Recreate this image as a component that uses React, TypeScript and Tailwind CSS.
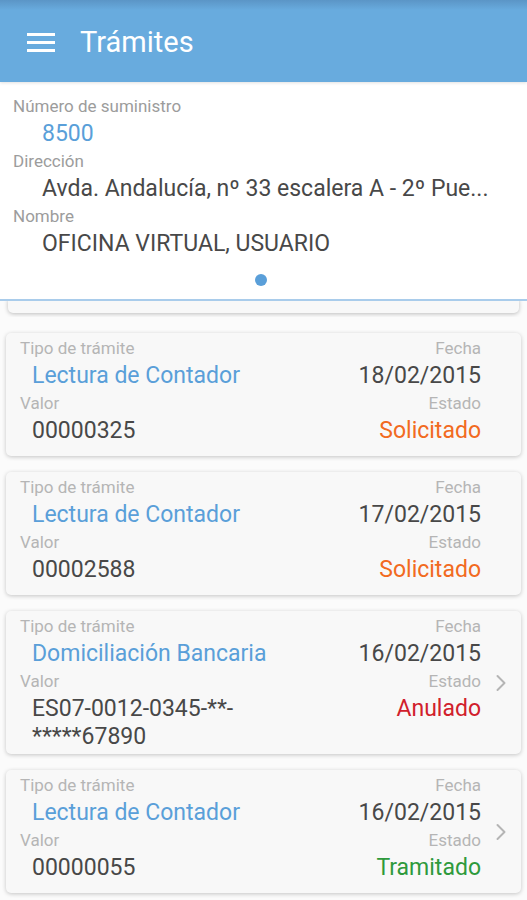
type Tramite = {
  tipo: string;
  fecha: string;
  valor: string[];
  estado: string;
  estadoClass: string;
  chevron?: boolean;
};

const tramites: Tramite[] = [
  { tipo: "Lectura de Contador", fecha: "18/02/2015", valor: ["00000325"], estado: "Solicitado", estadoClass: "text-[#f26a21]" },
  { tipo: "Lectura de Contador", fecha: "17/02/2015", valor: ["00002588"], estado: "Solicitado", estadoClass: "text-[#f26a21]" },
  { tipo: "Domiciliación Bancaria", fecha: "16/02/2015", valor: ["ES07-0012-0345-**-", "*****67890"], estado: "Anulado", estadoClass: "text-[#d1202c]", chevron: true },
  { tipo: "Lectura de Contador", fecha: "16/02/2015", valor: ["00000055"], estado: "Tramitado", estadoClass: "text-[#2e9a3c]", chevron: true },
];

const label = "h-[27px] leading-[27px] text-[17px] text-[#b5b5b5]";
const value = "h-[28px] leading-[28px] text-[23px]";

const Chevron = () => (
  <svg width="12" height="18" viewBox="0 0 12 18" fill="none" className="text-[#b5b5b5]">
    <path d="M2.5 2 L9.5 9 L2.5 16" stroke="currentColor" strokeWidth="2" strokeLinecap="round" strokeLinejoin="round" />
  </svg>
);

const Card = ({ t }: { t: Tramite }) => {
  return (
    <div className={`relative bg-[#f8f8f8] rounded-[5px] shadow-[0_1px_4px_rgba(0,0,0,0.22)] pl-[14px] pr-[40px] pt-[2px] ${t.valor.length > 1 ? "pb-[3px]" : "pb-[11px]"}`}>
      <div className="flex justify-between">
        <div className="flex flex-col">
          <span className={label}>Tipo de trámite</span>
          <span className={`${value} text-[#5a9fd9] pl-[12px]`}>{t.tipo}</span>
          <span className={label}>Valor</span>
          {t.valor.map((v) => (
            <span key={v} className={`${value} text-[#484848] pl-[12px]`}>{v}</span>
          ))}
        </div>
        <div className="flex flex-col items-end">
          <span className={label}>Fecha</span>
          <span className={`${value} text-[#484848]`}>{t.fecha}</span>
          <span className={label}>Estado</span>
          <span className={`${value} ${t.estadoClass}`}>{t.estado}</span>
        </div>
      </div>
      {t.chevron && (
        <div className="absolute right-[14px] top-0 bottom-0 flex items-center">
          <Chevron />
        </div>
      )}
    </div>
  );
};

export default function App() {
  return (
    <div className="w-[527px] h-[900px] overflow-hidden bg-[#fbfbfb] font-['Roboto',sans-serif]">
      <header className="h-[82px] bg-[linear-gradient(to_bottom,#5b95c6_0px,#68abde_10px,#68abde_100%)] flex items-center pl-[27px] pt-[3px] shadow-[0_1px_3px_rgba(0,0,0,0.12)] relative z-10">
        <div className="flex flex-col gap-[5px] w-[28px]">
          <span className="block h-[3px] bg-white" />
          <span className="block h-[3px] bg-white" />
          <span className="block h-[3px] bg-white" />
        </div>
        <h1 className="ml-[25px] text-white text-[29px] leading-none">Trámites</h1>
      </header>

      <section className="bg-white pt-[11px] px-[13px] flex flex-col border-b-2 border-[#a9cceb]">
        <span className="h-[27px] leading-[27px] text-[17px] text-[#9c9c9c]">Número de suministro</span>
        <span className={`${value} text-[#5a9fd9] pl-[29px]`}>8500</span>
        <span className="h-[27px] leading-[27px] text-[17px] text-[#9c9c9c]">Dirección</span>
        <span className={`${value} text-[#484848] pl-[29px] whitespace-nowrap`}>Avda. Andalucía, nº 33 escalera A - 2º Pue...</span>
        <span className="h-[27px] leading-[27px] text-[17px] text-[#9c9c9c]">Nombre</span>
        <span className={`${value} text-[#484848] pl-[29px]`}>OFICINA VIRTUAL, USUARIO</span>
        <div className="flex justify-center pt-[16px] pb-[13px] pr-[6px]">
          <span className="block w-[12px] h-[12px] rounded-full bg-[#5a9fd9]" />
        </div>
      </section>

      <div className="h-[16px] overflow-hidden px-[8px]">
        <div className="h-[14px] bg-[#f8f8f8] rounded-b-[5px] shadow-[0_1px_4px_rgba(0,0,0,0.25)] -mt-[2px]" />
      </div>

      <div className="flex flex-col gap-[16px] px-[6px] pt-[16px]">
        {tramites.map((t, i) => (
          <Card key={i} t={t} />
        ))}
      </div>
    </div>
  );
}
